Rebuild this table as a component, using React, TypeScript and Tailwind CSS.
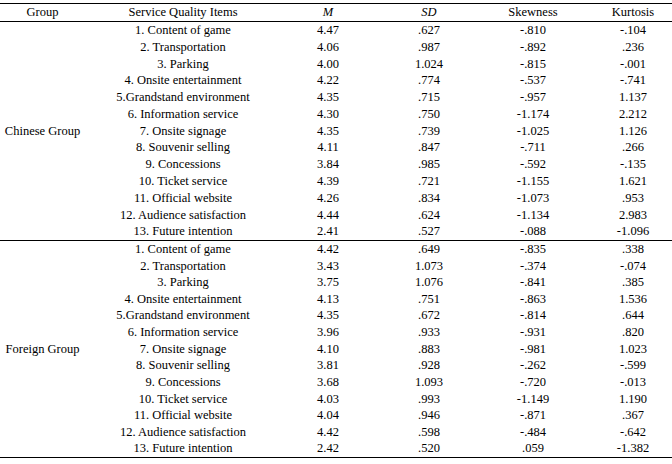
const chinese = [
  ['1. Content of game', '4.47', '.627', '-.810', '-.104'],
  ['2. Transportation', '4.06', '.987', '-.892', '.236'],
  ['3. Parking', '4.00', '1.024', '-.815', '-.001'],
  ['4. Onsite entertainment', '4.22', '.774', '-.537', '-.741'],
  ['5.Grandstand environment', '4.35', '.715', '-.957', '1.137'],
  ['6. Information service', '4.30', '.750', '-1.174', '2.212'],
  ['7. Onsite signage', '4.35', '.739', '-1.025', '1.126'],
  ['8. Souvenir selling', '4.11', '.847', '-.711', '.266'],
  ['9. Concessions', '3.84', '.985', '-.592', '-.135'],
  ['10. Ticket service', '4.39', '.721', '-1.155', '1.621'],
  ['11. Official website', '4.26', '.834', '-1.073', '.953'],
  ['12. Audience satisfaction', '4.44', '.624', '-1.134', '2.983'],
  ['13. Future intention', '2.41', '.527', '-.088', '-1.096'],
];

const foreign = [
  ['1. Content of game', '4.42', '.649', '-.835', '.338'],
  ['2. Transportation', '3.43', '1.073', '-.374', '-.074'],
  ['3. Parking', '3.75', '1.076', '-.841', '.385'],
  ['4. Onsite entertainment', '4.13', '.751', '-.863', '1.536'],
  ['5.Grandstand environment', '4.35', '.672', '-.814', '.644'],
  ['6. Information service', '3.96', '.933', '-.931', '.820'],
  ['7. Onsite signage', '4.10', '.883', '-.981', '1.023'],
  ['8. Souvenir selling', '3.81', '.928', '-.262', '-.599'],
  ['9. Concessions', '3.68', '1.093', '-.720', '-.013'],
  ['10. Ticket service', '4.03', '.993', '-1.149', '1.190'],
  ['11. Official website', '4.04', '.946', '-.871', '.367'],
  ['12. Audience satisfaction', '4.42', '.598', '-.484', '-.642'],
  ['13. Future intention', '2.42', '.520', '.059', '-1.382'],
];

function Block({ label, rows, height }: { label: string; rows: string[][]; height: string }) {
  return (
    <div className={`flex ${height}`}>
      <div className="w-[85px] flex items-center justify-center">{label}</div>
      <div className="flex-1 flex flex-col">
        {rows.map((r) => (
          <div key={r[0]} className="flex-1 grid grid-cols-[196px_94px_108px_100px_1fr] items-center text-center">
            {r.map((c, i) => (
              <span key={i} className={i === 4 ? 'pl-[11px]' : ''}>
                {c}
              </span>
            ))}
          </div>
        ))}
      </div>
    </div>
  );
}

export default function App() {
  return (
    <div className="w-[672px] h-[464px] bg-white pt-[3px] text-[12.5px] leading-none text-black [font-family:'Liberation_Serif',serif]">
      <div className="border-t border-b border-black">
        <div className="grid grid-cols-[85px_196px_94px_108px_100px_1fr] h-[17px] items-center text-center">
          <span>Group</span>
          <span>Service Quality Items</span>
          <span className="italic">M</span>
          <span className="italic">SD</span>
          <span>Skewness</span>
          <span className="pl-[11px]">Kurtosis</span>
        </div>
      </div>
      <Block label="Chinese Group" rows={chinese} height="h-[218px]" />
      <div className="border-t border-b border-black">
        <Block label="Foreign Group" rows={foreign} height="h-[216px]" />
      </div>
    </div>
  );
}
